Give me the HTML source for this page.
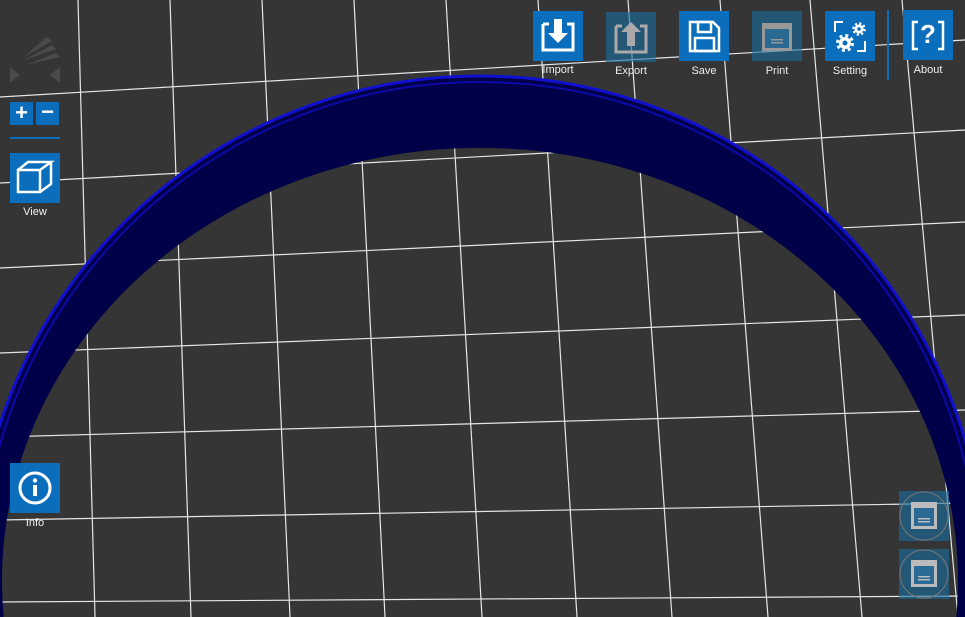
<!DOCTYPE html>
<html><head><meta charset="utf-8"><style>
html,body{margin:0;width:965px;height:617px;overflow:hidden}
body{background:#353535;font-family:"Liberation Sans",sans-serif;position:relative}
.b{position:absolute;width:50px;height:50px;background:#0a6ebd}
.f{background:rgba(25,110,160,0.6)}
.l{position:absolute;color:#eee;font-size:11px;width:70px;text-align:center}
svg{display:block}
</style></head><body>
<svg width="965" height="617" style="position:absolute;left:0;top:0">
<g stroke="#e6e6e6" stroke-width="1.2" fill="none">
<line x1="78" y1="0" x2="95" y2="617"/><line x1="170" y1="0" x2="191" y2="617"/><line x1="262" y1="0" x2="290" y2="617"/><line x1="354" y1="0" x2="385" y2="617"/><line x1="446" y1="0" x2="482" y2="617"/><line x1="538" y1="0" x2="577" y2="617"/><line x1="628" y1="0" x2="672" y2="617"/><line x1="720" y1="0" x2="768" y2="617"/><line x1="810" y1="0" x2="862" y2="617"/><line x1="902" y1="0" x2="958" y2="617"/>
<line x1="0" y1="97" x2="965" y2="40"/><line x1="0" y1="183" x2="965" y2="130"/><line x1="0" y1="268" x2="965" y2="222"/><line x1="0" y1="353" x2="965" y2="315"/><line x1="0" y1="437" x2="965" y2="410"/><line x1="0" y1="520" x2="965" y2="503"/><line x1="0" y1="602" x2="965" y2="596"/>
</g>
<path fill-rule="evenodd" fill="#000048" d="M-26,581a506,506 0 1,1 1012,0a506,506 0 1,1 -1012,0Z M2,581a478,433 0 1,0 956,0a478,433 0 1,0 -956,0Z"/>
<circle cx="480" cy="581" r="505" fill="none" stroke="#1010d0" stroke-width="3"/>
<circle cx="480" cy="581" r="499" fill="none" stroke="#0a0aa8" stroke-width="2"/>
</svg>
<!-- logo -->
<svg style="position:absolute;left:10px;top:35px" width="50" height="50"><g fill="#4a4a4a"><path d="M14 22 L36 2 L42 6 Z"/><path d="M12 26 L42 10 L46 14 Z"/><path d="M16 30 L46 18 L50 22Z"/><path d="M0 32 L10 40 L0 48Z"/><path d="M50 32 L40 40 L50 48Z"/></g></svg>
<div class="b" style="left:10px;top:102px;width:23px;height:23px;color:#fff;font-size:22px;line-height:21px;text-align:center;font-weight:bold">+</div>
<div class="b" style="left:36px;top:102px;width:23px;height:23px;color:#fff;font-size:22px;line-height:20px;text-align:center;font-weight:bold">−</div>
<div style="position:absolute;left:10px;top:137px;width:50px;height:2px;background:#0a6ebd"></div>
<div class="b" style="left:10px;top:153px"><svg width="50" height="50"><g stroke="#fff" stroke-width="2.5" fill="none"><rect x="8" y="17" width="22" height="22"/><path d="M8 17 L18 9 L41 9 L30 17 M41 9 L41 31 L30 39"/></g></svg></div>
<div class="l" style="left:0;top:206px">View</div>
<div class="b" style="left:10px;top:463px"><svg width="50" height="50"><circle cx="25" cy="25" r="15" stroke="#fff" stroke-width="3" fill="none"/><rect x="23" y="22" width="4" height="11" fill="#fff"/><circle cx="25" cy="17.5" r="2.2" fill="#fff"/></svg></div>
<div class="l" style="left:0;top:517px">Info</div>
<!-- top -->
<div class="b" style="left:533px;top:11px"><svg width="50" height="50"><path d="M10 13 H16 M34 13 H40 V39 H10 V13" stroke="#fff" stroke-width="3" fill="none"/><path d="M21 8 H29 V22 H35 L25 32 L15 22 H21Z" fill="#fff"/></svg></div>
<div class="l" style="left:523px;top:64px">Import</div>
<div class="b f" style="left:606px;top:12px"><svg width="50" height="50"><path d="M10 14 H16 M34 14 H40 V40 H10 V14" stroke="#aaa" stroke-width="3" fill="none"/><path d="M21 34 H29 V20 H35 L25 10 L15 20 H21Z" fill="#aaa"/></svg></div>
<div class="l" style="left:596px;top:65px">Export</div>
<div class="b" style="left:679px;top:11px"><svg width="50" height="50"><g stroke="#fff" stroke-width="2.5" fill="none"><path d="M11 11 H34 L40 17 V40 H11Z"/><rect x="19" y="11" width="13" height="10"/><rect x="16" y="27" width="19" height="13"/></g></svg></div>
<div class="l" style="left:669px;top:65px">Save</div>
<div class="b f" style="left:752px;top:11px"><svg width="50" height="50"><rect x="10" y="12" width="30" height="28" fill="#999"/><rect x="13" y="18" width="24" height="19" fill="#2a6a90"/><rect x="19" y="28" width="12" height="1.5" fill="#999"/><rect x="19" y="31" width="12" height="1.5" fill="#999"/></svg></div>
<div class="l" style="left:742px;top:65px">Print</div>
<div class="b" style="left:825px;top:11px"><svg width="50" height="50"><g stroke="#fff" stroke-width="2" fill="none"><path d="M10 21 V11 H18 M40 30 V40 H32"/></g>
<circle cx="20" cy="32" r="6" fill="#fff"/><circle cx="20" cy="32" r="7.5" stroke="#fff" stroke-width="3" stroke-dasharray="2.95 2.95" fill="none"/><circle cx="20" cy="32" r="2.5" fill="#0a6ebd"/>
<circle cx="34" cy="18" r="4.5" fill="#fff"/><circle cx="34" cy="18" r="5.5" stroke="#fff" stroke-width="2.5" stroke-dasharray="2.16 2.16" fill="none"/><circle cx="34" cy="18" r="1.8" fill="#0a6ebd"/></svg></div>
<div class="l" style="left:815px;top:65px">Setting</div>
<div style="position:absolute;left:887px;top:10px;width:2px;height:70px;background:#0a6ebd"></div>
<div class="b" style="left:903px;top:10px"><svg width="50" height="50"><path d="M15 12 H10 V39 H15 M35 12 H40 V39 H35" stroke="#fff" stroke-width="2.5" fill="none"/><text x="25" y="33" fill="#fff" font-size="26" font-weight="bold" text-anchor="middle" font-family="Liberation Sans">?</text></svg></div>
<div class="l" style="left:893px;top:64px">About</div>
<!-- bottom right -->
<div class="b f" style="left:899px;top:491px"><svg width="50" height="50"><circle cx="25" cy="25" r="24" stroke="#777" fill="none"/><rect x="12" y="11" width="26" height="27" fill="#bbb"/><rect x="15" y="17" width="20" height="18" fill="#2a6a95"/><rect x="19" y="27" width="12" height="1.5" fill="#bbb"/><rect x="19" y="30" width="12" height="1.5" fill="#bbb"/></svg></div>
<div class="b f" style="left:899px;top:549px"><svg width="50" height="50"><circle cx="25" cy="25" r="24" stroke="#777" fill="none"/><rect x="12" y="11" width="26" height="27" fill="#bbb"/><rect x="15" y="17" width="20" height="18" fill="#2a6a95"/><rect x="19" y="27" width="12" height="1.5" fill="#bbb"/><rect x="19" y="30" width="12" height="1.5" fill="#bbb"/></svg></div>
</body></html>
